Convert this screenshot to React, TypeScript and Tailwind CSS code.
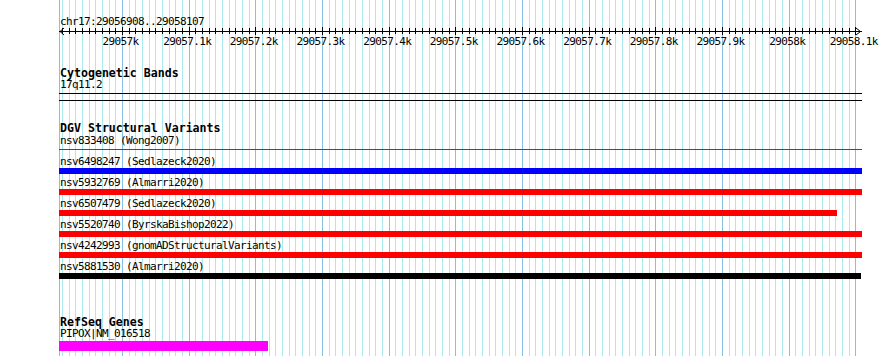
import React from "react";

interface Variant {
  name: string;
  study: string;
  color: string;
  end: number; // right edge in px (page coords)
  thin?: boolean;
}

const VIEW_START = 59;
const GRID_MAJOR_0 = 122;
const PX_PER_MINOR = 20 / 3;

const variants: Variant[] = [
  { name: "nsv833408", study: "Wong2007", color: "#ff0000", end: 862, thin: true },
  { name: "nsv6498247", study: "Sedlazeck2020", color: "#0000ff", end: 862 },
  { name: "nsv5932769", study: "Almarri2020", color: "#ff0000", end: 862 },
  { name: "nsv6507479", study: "Sedlazeck2020", color: "#ff0000", end: 837 },
  { name: "nsv5520740", study: "ByrskaBishop2022", color: "#ff0000", end: 862 },
  { name: "nsv4242993", study: "gnomADStructuralVariants", color: "#ff0000", end: 862 },
  { name: "nsv5881530", study: "Almarri2020", color: "#000000", end: 861 },
];

const majorLabels = [
  "29057k",
  "29057.1k",
  "29057.2k",
  "29057.3k",
  "29057.4k",
  "29057.5k",
  "29057.6k",
  "29057.7k",
  "29057.8k",
  "29057.9k",
  "29058k",
  "29058.1k",
];

// tick / gridline positions, every 10bp
const ticks: { x: number; major: boolean }[] = [];
for (let k = -9; k <= 110; k++) {
  ticks.push({ x: Math.round(GRID_MAJOR_0 + k * PX_PER_MINOR), major: k % 10 === 0 });
}

const GridBackdrop: React.FC = () => (
  <svg className="absolute inset-0" width={890} height={356} shapeRendering="crispEdges">
    <rect x={VIEW_START} y={0} width={1} height={356} fill="#88c0e4" />
    {ticks.map(t => (
      <rect key={t.x} x={t.x} y={0} width={1} height={356} fill={t.major ? "#88c0e4" : "#aaeaee"} />
    ))}
  </svg>
);

const Ruler: React.FC = () => (
  <svg width={803} height={20} viewBox="59 27 803 20" className="block overflow-visible" shapeRendering="crispEdges">
    <rect x={59} y={31} width={803} height={1} fill="#000" />
    <polyline points="64,28 60,31.5 64,35" fill="none" stroke="#000" strokeWidth={1} shapeRendering="auto" />
    <polyline points="856,28 860.5,31.5 856,35" fill="none" stroke="#000" strokeWidth={1} shapeRendering="auto" />
    {ticks.map(t => (
      <rect key={t.x} x={t.x} y={t.major ? 27 : 28} width={1} height={t.major ? 8 : 6} fill="#000" />
    ))}
    {majorLabels.map((label, i) => (
      <text
        key={label}
        x={GRID_MAJOR_0 + i * 10 * PX_PER_MINOR - 1.5}
        y={44.5}
        textAnchor="middle"
        fontSize={11}
        letterSpacing={-0.62}
        fontFamily="'DejaVu Sans Mono', monospace"
        fill="#000"
      >
        {label}
      </text>
    ))}
  </svg>
);

const TrackLabel: React.FC<{ children: React.ReactNode; className?: string }> = ({ children, className }) => (
  <div className={`h-[12px] pl-px text-[11.6px] font-bold leading-[12px] whitespace-pre ${className ?? ""}`}>{children}</div>
);

const FeatureLabel: React.FC<{ children: React.ReactNode; className?: string }> = ({ children, className }) => (
  <div className={`h-[10px] pl-px text-[11px] leading-[10px] tracking-[-0.62px] whitespace-pre ${className ?? ""}`}>
    {children}
  </div>
);

export default function App() {
  return (
    <div className="relative h-[356px] w-[890px] overflow-hidden bg-white font-['DejaVu_Sans_Mono',monospace] text-black">
      <GridBackdrop />

      <div className="relative flex w-[862px] flex-col pl-[59px] pt-[17px]">
        {/* overview ruler */}
        <FeatureLabel>chr17:29056908..29058107</FeatureLabel>
        <Ruler />

        {/* cytogenetic bands */}
        <TrackLabel className="mt-[20px]">Cytogenetic Bands</TrackLabel>
        <FeatureLabel className="mt-px">17q11.2</FeatureLabel>
        <div className="mt-[3px] h-px w-[803px] bg-black" />
        <div className="mt-[6px] h-px w-[803px] bg-black" />

        {/* DGV */}
        <TrackLabel className="mt-[21px]">DGV Structural Variants</TrackLabel>
        {variants.map((v, i) => (
          <React.Fragment key={v.name}>
            <FeatureLabel className={i === 0 ? "mt-[2px]" : "mt-[4px]"}>
              {v.name} ({v.study})
            </FeatureLabel>
            {v.thin ? (
              <div className="mt-[3px] mb-[3px] h-px" style={{ width: v.end - VIEW_START, backgroundColor: v.color }} />
            ) : (
              <div className="mt-px h-[6px]" style={{ width: v.end - VIEW_START, backgroundColor: v.color }} />
            )}
          </React.Fragment>
        ))}

        {/* RefSeq */}
        <TrackLabel className="mt-[37px]">RefSeq Genes</TrackLabel>
        <FeatureLabel className="mt-px">PIPOX|NM_016518</FeatureLabel>
        <div className="mt-[2px] h-[10px] w-[209px] bg-[#ff00ff]" />
      </div>
    </div>
  );
}
